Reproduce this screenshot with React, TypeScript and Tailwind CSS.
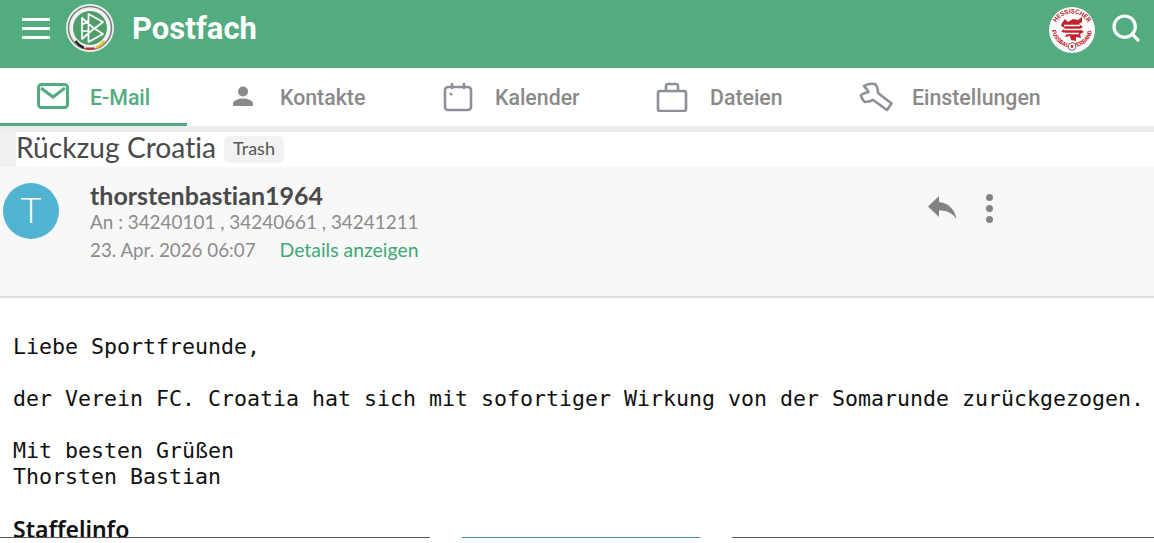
import { Search } from "lucide-react";

const Logo = () => (
  <svg width="50" height="50" viewBox="0 0 50 50" className="shrink-0">
    <circle cx="25" cy="25" r="24" fill="#eef3ef" />
    <circle cx="25" cy="25" r="21.5" fill="none" stroke="#7f7f7f" strokeWidth="1.6" />
    <circle cx="25" cy="25" r="17.5" fill="#4f9e6c" stroke="#fff" strokeWidth="1" />
    <path d="M10.5 38 A20.5 20.5 0 0 0 19 44.8" fill="none" stroke="#222" strokeWidth="2.2" />
    <path d="M20.5 45.2 A21 21 0 0 0 29.5 45.2" fill="none" stroke="#cc2a2a" strokeWidth="2.2" />
    <path d="M31 44.8 A20.5 20.5 0 0 0 39.5 38" fill="none" stroke="#e8b92c" strokeWidth="2.2" />
    <path
      d="M17 15 L17 36 L29 25.5 Z M23.5 11 L23.5 39 L38 31 L29.5 25.5 L38 19 Z M17 22 L24 17 M17 28 L24 28"
      fill="none"
      stroke="#fff"
      strokeWidth="1.7"
      strokeLinejoin="round"
    />
  </svg>
);

const VerbandLogo = () => (
  <svg width="46" height="46" viewBox="0 0 46 46" className="shrink-0">
    <circle cx="23" cy="23" r="23" fill="#fff" />
    <defs>
      <path id="ringTop" d="M4.5 25 A18.5 18.5 0 0 1 41.5 25" />
      <path id="ringBottom" d="M2.5 20 A20.5 20.5 0 0 0 43.5 20" />
    </defs>
    <text fontSize="6.4" fontWeight="700" fill="#c4232c" fontFamily="Roboto, sans-serif">
      <textPath href="#ringTop" startOffset="50%" textAnchor="middle">
        HESSISCHER
      </textPath>
    </text>
    <text fontSize="5.8" fontWeight="700" fill="#c4232c" fontFamily="Roboto, sans-serif">
      <textPath href="#ringBottom" startOffset="27%" textAnchor="middle">
        FUSSBALL
      </textPath>
    </text>
    <text fontSize="5.8" fontWeight="700" fill="#c4232c" fontFamily="Roboto, sans-serif">
      <textPath href="#ringBottom" startOffset="73%" textAnchor="middle">
        VERBAND
      </textPath>
    </text>
    <path
      d="M13 16 L16 12 L19 15 L24 12 L29 13 L33 10 L33 15 L30 17 L34 20 L31 22 L35 25 L31 27 L32 31 L27 30 L27 34 L22 33 L21 29 L16 30 L18 26 L12 25 L16 21 L12 19 Z"
      fill="#c4232c"
    />
    <path d="M15 18.5 L31 18.5 M15 22.5 L32 22.5 M17 26.5 L30 26.5" stroke="#fff" strokeWidth="1.4" />
    <circle cx="23" cy="39.5" r="3.8" fill="#fff" stroke="#444" strokeWidth="0.8" />
    <circle cx="23" cy="39.5" r="1.4" fill="#c4232c" />
  </svg>
);

const Tab = ({ icon, label, className }: { icon: React.ReactNode; label: string; className: string }) => (
  <div className={`flex items-center text-[#8a8a8a] text-[21.3px] font-medium ${className}`}>
    {icon}
    <span className="pt-[1px]">{label}</span>
  </div>
);

const stroke = {
  fill: "none",
  stroke: "#8b9196",
  strokeWidth: 2.6,
  strokeLinejoin: "round" as const,
  strokeLinecap: "round" as const,
};

export default function App() {
  return (
    <div className="h-[543px] w-[1154px] overflow-hidden bg-white relative font-['Roboto',sans-serif]">
      <header className="h-[68px] bg-[#53ab80] flex items-center pb-[12px] pl-[22px] pr-[12px] text-white">
        <div className="flex flex-col gap-[6px] shrink-0">
          <span className="w-[28px] h-[3px] bg-white" />
          <span className="w-[28px] h-[3px] bg-white" />
          <span className="w-[28px] h-[3px] bg-white" />
        </div>
        <div className="ml-[15px]">
          <Logo />
        </div>
        <h1 className="ml-[17px] mt-[2px] text-[31px] font-bold">Postfach</h1>
        <div className="ml-auto mr-[15px] mt-[4px]">
          <VerbandLogo />
        </div>
        <Search size={32} strokeWidth={2.4} />
      </header>

      <nav className="h-[64px] flex border-b-[6px] border-[#ececec]">
        <div className="w-[187px] h-[58px] shrink-0 flex items-center pl-[37px] text-[#53ab80] text-[21.3px] font-medium border-b-[3px] border-[#53ab80]">
          <svg width="32" height="26" viewBox="0 0 32 26" className="mr-[21px] shrink-0">
            <rect x="1.5" y="1.5" width="29" height="23" rx="3" fill="none" stroke="#53ab80" strokeWidth="3" />
            <path d="M4 5 L16 14 L28 5" fill="none" stroke="#53ab80" strokeWidth="3" />
          </svg>
          <span className="pt-[4px]">E-Mail</span>
        </div>
        <Tab
          className="w-[256px] pl-[43px]"
          label="Kontakte"
          icon={
            <svg width="26" height="26" viewBox="0 0 26 26" className="mr-[24px] shrink-0">
              <circle cx="13" cy="7.5" r="5" fill="#8a8a8a" />
              <path d="M3 22 L3 19.5 C3 16 9 14.5 13 14.5 C17 14.5 23 16 23 19.5 L23 22 Z" fill="#8a8a8a" />
            </svg>
          }
        />
        <Tab
          className="w-[213px]"
          label="Kalender"
          icon={
            <svg width="30" height="30" viewBox="0 0 30 30" className="mr-[22px] shrink-0">
              <rect x="2" y="5" width="26" height="23" rx="3" {...stroke} />
              <path d="M9 2 L9 6 M21 2 L21 6" {...stroke} />
              <circle cx="8" cy="12" r="1.5" fill="#8b9196" />
            </svg>
          }
        />
        <Tab
          className="w-[203px]"
          label="Dateien"
          icon={
            <svg width="32" height="30" viewBox="0 0 32 30" className="mr-[22px] shrink-0">
              <rect x="2" y="9" width="28" height="20" rx="2" {...stroke} />
              <path d="M10 9 L10 4 Q10 2 12 2 L20 2 Q22 2 22 4 L22 9" {...stroke} />
            </svg>
          }
        />
        <Tab
          label="Einstellungen"
          className=""
          icon={
            <svg width="34" height="30" viewBox="0 0 34 30" className="mr-[19px] shrink-0">
              <path d="M16 2 Q9 1 5 4 Q8 7 9.5 10 Q5 11 2 13 Q3 18 6 20 Q10 20 14 18 L28 28 L32.5 21.5 L19 11 Q19 5 16 2 Z" {...stroke} />
            </svg>
          }
        />
      </nav>

      <div className="h-[35px] flex items-center">
        <div className="w-[16px] h-[35px] bg-[#f0f0f0] shrink-0" />
        <h2 className="text-[28.2px] text-[#4a4a4a] font-['Lato',sans-serif] leading-none mb-[4px] [font-variant-ligatures:none]">
          Rückzug Croatia
        </h2>
        <span className="ml-[8px] h-[27px] w-[60px] pb-[3px] flex items-center justify-center rounded-[6px] bg-[#f2f2f2] text-[18px] text-[#555] font-['Lato',sans-serif]">
          Trash
        </span>
      </div>

      <section className="h-[131px] bg-[#f8f8f8] border-b-[2px] border-[#dedede] flex font-['Lato',sans-serif] [font-variant-ligatures:none]">
        <div className="w-[56px] h-[56px] ml-[3px] mt-[16px] pb-[4px] rounded-full bg-[#4fb3d1] text-white text-[36px] font-light flex items-center justify-center shrink-0">
          T
        </div>
        <div className="ml-[31px] mt-[13px]">
          <div className="text-[25px] font-bold text-[#4a4a4a] leading-[30px]">thorstenbastian1964</div>
          <div className="text-[18.9px] text-[#8c8c8c] leading-[24px]">An : 34240101 , 34240661 , 34241211</div>
          <div className="flex text-[18.8px] leading-[26px] mt-[3px] text-[#8c8c8c]">
            <span>23. Apr. 2026 06:07</span>
            <span className="ml-[24px] text-[19.4px] text-[#3fa877]">Details anzeigen</span>
          </div>
        </div>
        <div className="ml-auto mr-[161px] mt-[28px] flex items-start">
          <svg width="30" height="24" viewBox="0 0 30 24">
            <path d="M12 7 L12 1 L1 11.5 L12 22 L12 15.5 C20 15.5 25.5 18 29.5 24 C28 15.5 23 8.5 12 7 Z" fill="#838383" />
          </svg>
          <div className="ml-[29px] -mt-[1px] flex flex-col gap-[4px]">
            <span className="w-[7px] h-[7px] rounded-full bg-[#838383]" />
            <span className="w-[7px] h-[7px] rounded-full bg-[#838383]" />
            <span className="w-[7px] h-[7px] rounded-full bg-[#838383]" />
          </div>
        </div>
      </section>

      <article className="pl-[13px] pt-[36px] text-[21.6px] text-[#111] leading-[26px] font-['DejaVu_Sans_Mono',monospace] whitespace-pre">
        <p>Liebe Sportfreunde,</p>
        <p className="mt-[26px]">der Verein FC. Croatia hat sich mit sofortiger Wirkung von der Somarunde zurückgezogen.</p>
        <p className="mt-[26px]">Mit besten Grüßen</p>
        <p>Thorsten Bastian</p>
        <p className="mt-[26px] text-[23px] font-['Noto_Sans',sans-serif] font-semibold">Staffelinfo</p>
      </article>

      {/* top edge of the cards cut off at the bottom of the shot */}
      <div className="absolute left-0 right-0 top-[537px] h-[1px] flex gap-[32px]">
        <span className="w-[430px] bg-[#555] rounded-r-full" />
        <span className="w-[238px] bg-[#3f86b8] rounded-full" />
        <span className="flex-1 bg-[#555] rounded-l-full" />
      </div>
    </div>
  );
}
